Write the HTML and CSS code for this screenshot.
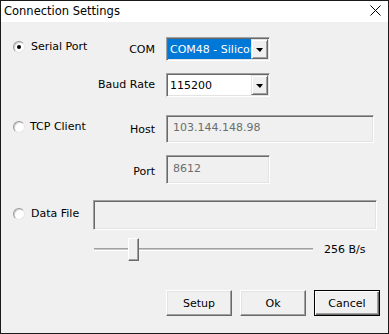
FILE: index.html
```html
<!DOCTYPE html>
<html lang="en">

<head>
  <meta charset="UTF-8">
  <title>Connection Settings</title>
  <link rel="stylesheet" href="styles.css">
</head>

<body>
  <div class="window">
    <div class="titlebar">
      <span class="title">Connection Settings</span>
      <svg class="close" width="11" height="11" viewBox="0 0 11 11">
        <path d="M0.5 0.5 L10.5 10.5 M10.5 0.5 L0.5 10.5" stroke="#000" stroke-width="1" fill="none"/>
      </svg>
    </div>

    <div class="dialog">

      <div class="row row-serial">
        <label class="radio"><span class="ring checked"></span>Serial Port</label>
        <span class="lbl lbl-com">COM</span>
        <div class="combo">
          <span class="combo-text selected">COM48 - Silicon Labs CP210x</span>
          <span class="combo-btn"><span class="arrow"></span></span>
        </div>
      </div>

      <div class="row row-baud">
        <span></span>
        <span class="lbl lbl-baud">Baud Rate</span>
        <div class="combo">
          <span class="combo-text">115200</span>
          <span class="combo-btn"><span class="arrow"></span></span>
        </div>
      </div>

      <div class="row row-host">
        <label class="radio radio-tcp"><span class="ring"></span>TCP Client</label>
        <span class="lbl lbl-host">Host</span>
        <div class="field field-host">103.144.148.98</div>
      </div>

      <div class="row row-port">
        <span></span>
        <span class="lbl lbl-port">Port</span>
        <div class="field field-port">8612</div>
      </div>

      <div class="row row-file">
        <label class="radio radio-file"><span class="ring"></span>Data File</label>
        <div class="field field-file"></div>
      </div>

      <div class="row row-speed">
        <span></span>
        <div class="slider">
          <div class="track"></div>
          <div class="thumb"></div>
        </div>
        <span class="speed">256 B/s</span>
      </div>

      <div class="buttonArea">
        <button class="btn">Setup</button>
        <button class="btn">Ok</button>
        <button class="btn btn-default">Cancel</button>
      </div>

    </div>
  </div>
</body>
</html>
```

FILE: styles.css
```css
body {
  margin: 0;
  font-family: "DejaVu Sans", sans-serif;
  font-size: 11px;
  line-height: 13px;
  color: #000;
}

.window {
  width: 389px;
  height: 334px;
  box-sizing: border-box;
  border: 1px solid #1a1a1a;
  background: #f0f0f0;
  display: flex;
  flex-direction: column;
}

.titlebar {
  height: 21px;
  background: #fff;
  display: flex;
  align-items: center;
  justify-content: space-between;
  padding: 0 7px 0 3px;
}

.title {
  font-size: 11.5px;
  margin-top: -1px;
}

.close {
  margin-top: -2px;
}

.dialog {
  padding-top: 15px;
}

.row {
  display: grid;
  grid-template-columns: 92px 73px 1fr;
  align-items: start;
}

.row-serial { height: 24px; }
.row-baud { height: 24px; margin-top: 12px; }
.row-host { height: 27px; margin-top: 18px; }
.row-port { height: 29px; margin-top: 13px; }
.row-file { height: 30px; margin-top: 16px; grid-template-columns: 92px 1fr; }
.row-speed { height: 23px; margin-top: 8px; grid-template-columns: 93px 219px 1fr; }

/* radio buttons */
.radio {
  display: flex;
  align-items: center;
  gap: 6px;
  padding-left: 12px;
  margin-top: 3px;
}

.radio-tcp { margin-top: 5px; gap: 5px; }
.radio-file { margin-top: 7px; }

.ring {
  width: 10px;
  height: 10px;
  border-radius: 50%;
  background: #fff;
  border: 1px solid;
  border-color: #9a9a9a #e6e6e6 #e6e6e6 #9a9a9a;
  box-shadow: inset 1px 1px 0 #d0d0d0;
  display: flex;
  align-items: center;
  justify-content: center;
}

.ring.checked::after {
  content: "";
  width: 4px;
  height: 4px;
  border-radius: 50%;
  background: #000;
}

.lbl {
  text-align: right;
  padding-right: 11px;
}

.lbl-com { margin-top: 6px; }
.lbl-baud { margin-top: 5px; }
.lbl-host { margin-top: 8px; }
.lbl-port { margin-top: 10px; }

/* combo boxes */
.combo {
  width: 104px;
  height: 24px;
  box-sizing: border-box;
  background: #fff;
  border: 1px solid;
  border-color: #a0a0a0 #fff #fff #a0a0a0;
  box-shadow: inset 1px 1px 0 #696969, inset -1px -1px 0 #e3e3e3;
  padding: 1px;
  display: flex;
}

.combo-text {
  flex: 1;
  overflow: hidden;
  white-space: nowrap;
  padding: 4px 0 0 2px;
}

.combo-text.selected {
  background: #0078d7;
  color: #fff;
}

.combo-btn {
  width: 17px;
  box-sizing: border-box;
  background: #f0f0f0;
  border: 1px solid;
  border-color: #e3e3e3 #696969 #696969 #e3e3e3;
  box-shadow: inset 1px 1px 0 #fff, inset -1px -1px 0 #a0a0a0;
  display: flex;
  align-items: center;
  justify-content: center;
}

.arrow {
  width: 0;
  height: 0;
  border-left: 4px solid transparent;
  border-right: 3px solid transparent;
  border-top: 4px solid #000;
  margin-top: 1px;
}

/* text fields (disabled) */
.field {
  box-sizing: border-box;
  border: 1px solid;
  border-color: #a0a0a0 #fff #fff #a0a0a0;
  box-shadow: inset 1px 1px 0 #696969, inset -1px -1px 0 #e3e3e3;
  background: #f0f0f0;
  color: #6d6d6d;
  padding: 5px 0 0 6px;
}

.field-host { width: 208px; height: 28px; }
.field-port { width: 104px; height: 29px; padding-top: 6px; }
.field-file { width: 284px; height: 30px; }

/* slider */
.slider {
  height: 23px;
  display: flex;
  align-items: center;
}

.track {
  width: 219px;
  height: 3px;
  box-sizing: border-box;
  border-top: 1px solid #a0a0a0;
  border-bottom: 1px solid #fff;
  background: #c8c8c8;
}

.thumb {
  width: 11px;
  height: 23px;
  box-sizing: border-box;
  margin-left: -185px;
  background: #f0f0f0;
  border: 1px solid;
  border-color: #fff #696969 #696969 #fff;
  box-shadow: inset -1px -1px 0 #a0a0a0;
}

.speed {
  padding-left: 11px;
  margin-top: 5px;
}

/* buttons */
.buttonArea {
  display: flex;
  gap: 8px;
  padding-left: 165px;
  margin-top: 29px;
}

.btn {
  width: 66px;
  height: 26px;
  box-sizing: border-box;
  font-family: inherit;
  font-size: 11px;
  color: #000;
  background: #f0f0f0;
  border: 1px solid;
  border-color: #fff #696969 #696969 #fff;
  box-shadow: inset -1px -1px 0 #a0a0a0, inset 1px 1px 0 #e3e3e3;
  padding: 0;
}

.btn-default {
  border: 1px solid #000;
  box-shadow: inset 1px 1px 0 #fff, inset -1px -1px 0 #696969, inset -2px -2px 0 #a0a0a0;
}
```
